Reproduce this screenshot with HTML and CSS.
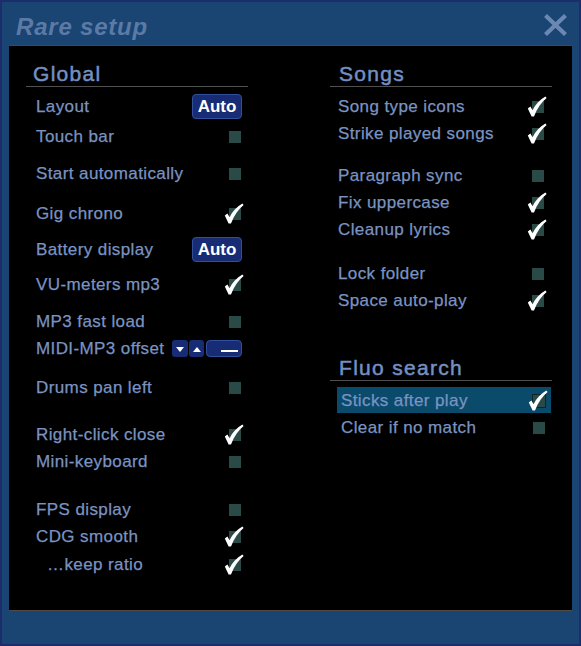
FILE: index.html
```html
<!DOCTYPE html>
<html>
<head>
<meta charset="utf-8">
<title>Rare setup</title>
<link rel="stylesheet" href="styles.css">
</head>
<body>
<div class="win">
  <div class="titlebar">
    <div class="title">Rare setup</div>
    <svg class="close" viewBox="0 0 23 22"><path d="M1.5 1.5 L21.5 20.5 M21.5 1.5 L1.5 20.5"/></svg>
  </div>
  <div class="panel">
    <div class="col left">
      <div class="hdr">Global</div>
      <div class="row"><span>Layout</span><span class="btn-auto">Auto</span></div>
      <div class="row sp3"><span>Touch bar</span><span class="cb"></span></div>
      <div class="row sp10"><span>Start automatically</span><span class="cb"></span></div>
      <div class="row sp13"><span>Gig chrono</span><span class="cb on"><svg class="tick" viewBox="0 0 20 21"><path d="M0.8 12.6 L3.4 10.4 L5.6 14.2 C8.5 8.6 12.5 4 18.4 0.6 L19.6 2 C14.6 6.4 10 12.4 7 20.4 L4.6 20.4 Z"/></svg></span></div>
      <div class="row sp9"><span>Battery display</span><span class="btn-auto">Auto</span></div>
      <div class="row sp8"><span>VU-meters mp3</span><span class="cb on"><svg class="tick" viewBox="0 0 20 21"><path d="M0.8 12.6 L3.4 10.4 L5.6 14.2 C8.5 8.6 12.5 4 18.4 0.6 L19.6 2 C14.6 6.4 10 12.4 7 20.4 L4.6 20.4 Z"/></svg></span></div>
      <div class="row sp10"><span>MP3 fast load</span><span class="cb"></span></div>
      <div class="row"><span>MIDI-MP3 offset</span>
        <span class="stepper">
          <span class="sb"><span class="tri-down"></span></span>
          <span class="sb up"><span class="tri-up"></span></span>
          <span class="sval"><span class="dash"></span></span>
        </span>
      </div>
      <div class="row sp12"><span>Drums pan left</span><span class="cb"></span></div>
      <div class="row sp20"><span>Right-click close</span><span class="cb on"><svg class="tick" viewBox="0 0 20 21"><path d="M0.8 12.6 L3.4 10.4 L5.6 14.2 C8.5 8.6 12.5 4 18.4 0.6 L19.6 2 C14.6 6.4 10 12.4 7 20.4 L4.6 20.4 Z"/></svg></span></div>
      <div class="row"><span>Mini-keyboard</span><span class="cb"></span></div>
      <div class="row sp21"><span>FPS display</span><span class="cb"></span></div>
      <div class="row"><span>CDG smooth</span><span class="cb on"><svg class="tick" viewBox="0 0 20 21"><path d="M0.8 12.6 L3.4 10.4 L5.6 14.2 C8.5 8.6 12.5 4 18.4 0.6 L19.6 2 C14.6 6.4 10 12.4 7 20.4 L4.6 20.4 Z"/></svg></span></div>
      <div class="row sp1 indent"><span>…keep ratio</span><span class="cb on"><svg class="tick" viewBox="0 0 20 21"><path d="M0.8 12.6 L3.4 10.4 L5.6 14.2 C8.5 8.6 12.5 4 18.4 0.6 L19.6 2 C14.6 6.4 10 12.4 7 20.4 L4.6 20.4 Z"/></svg></span></div>
    </div>
    <div class="col right">
      <div class="hdr">Songs</div>
      <div class="row"><span>Song type icons</span><span class="cb on"><svg class="tick" viewBox="0 0 20 21"><path d="M0.8 12.6 L3.4 10.4 L5.6 14.2 C8.5 8.6 12.5 4 18.4 0.6 L19.6 2 C14.6 6.4 10 12.4 7 20.4 L4.6 20.4 Z"/></svg></span></div>
      <div class="row"><span>Strike played songs</span><span class="cb on"><svg class="tick" viewBox="0 0 20 21"><path d="M0.8 12.6 L3.4 10.4 L5.6 14.2 C8.5 8.6 12.5 4 18.4 0.6 L19.6 2 C14.6 6.4 10 12.4 7 20.4 L4.6 20.4 Z"/></svg></span></div>
      <div class="row sp15"><span>Paragraph sync</span><span class="cb"></span></div>
      <div class="row"><span>Fix uppercase</span><span class="cb on"><svg class="tick" viewBox="0 0 20 21"><path d="M0.8 12.6 L3.4 10.4 L5.6 14.2 C8.5 8.6 12.5 4 18.4 0.6 L19.6 2 C14.6 6.4 10 12.4 7 20.4 L4.6 20.4 Z"/></svg></span></div>
      <div class="row"><span>Cleanup lyrics</span><span class="cb on"><svg class="tick" viewBox="0 0 20 21"><path d="M0.8 12.6 L3.4 10.4 L5.6 14.2 C8.5 8.6 12.5 4 18.4 0.6 L19.6 2 C14.6 6.4 10 12.4 7 20.4 L4.6 20.4 Z"/></svg></span></div>
      <div class="row sp17"><span>Lock folder</span><span class="cb"></span></div>
      <div class="row"><span>Space auto-play</span><span class="cb on"><svg class="tick" viewBox="0 0 20 21"><path d="M0.8 12.6 L3.4 10.4 L5.6 14.2 C8.5 8.6 12.5 4 18.4 0.6 L19.6 2 C14.6 6.4 10 12.4 7 20.4 L4.6 20.4 Z"/></svg></span></div>
      <div class="hdr sp42">Fluo search</div>
      <div class="row fl hl"><span>Sticks after play</span><span class="cb on"><svg class="tick" viewBox="0 0 20 21"><path d="M0.8 12.6 L3.4 10.4 L5.6 14.2 C8.5 8.6 12.5 4 18.4 0.6 L19.6 2 C14.6 6.4 10 12.4 7 20.4 L4.6 20.4 Z"/></svg></span></div>
      <div class="row fl"><span>Clear if no match</span><span class="cb"></span></div>
    </div>
  </div>
</div>
</body>
</html>
```

FILE: styles.css
```css
* { box-sizing: border-box; }

body {
  margin: 0;
  background: #1a4472;
  font-family: "Liberation Sans", Arial, sans-serif;
}

.win {
  width: 581px;
  height: 646px;
  border: 2px solid #1d2c6c;
  background: #1a4472;
  display: flex;
  flex-direction: column;
}

.titlebar {
  height: 43px;
  flex: none;
  display: flex;
  justify-content: space-between;
  align-items: flex-start;
  padding: 0 12px 0 14px;
}

.title {
  font-size: 24px;
  font-weight: bold;
  font-style: italic;
  line-height: 30px;
  padding-top: 10px;
  color: #5b7aa6;
  letter-spacing: 0.8px;
}

.close {
  width: 23px;
  height: 22px;
  margin-top: 12px;
}
.close path {
  stroke: #6a88b2;
  stroke-width: 4.2;
  fill: none;
}

.panel {
  margin: 0 7px;
  height: 566px;
  flex: none;
  background: #000;
  border-top: 1px solid #474747;
  border-bottom: 1px solid #4f4a44;
  display: grid;
  grid-template-columns: 222px 222px;
  column-gap: 82px;
  align-content: start;
  padding: 16px 0 0 17px;
}

.col {
  display: flex;
  flex-direction: column;
}

.hdr {
  font-size: 21px;
  line-height: 24px;
  color: #7290c4;
  -webkit-text-stroke: 0.5px #7290c4;
  letter-spacing: 1.3px;
  border-bottom: 1px solid #505050;
  padding-left: 7px;
  margin-bottom: 6px;
}
.right .hdr { padding-left: 9px; }

.row {
  height: 27px;
  flex: none;
  display: flex;
  align-items: center;
  justify-content: space-between;
  padding: 0 7px 0 10px;
  font-size: 17px;
  line-height: 27px;
  color: #7a93c2;
  -webkit-text-stroke: 0.25px #7a93c2;
  letter-spacing: 0.4px;
  white-space: nowrap;
}
.right .row { padding: 0 8px; }
.right .row.fl {
  margin: 0 1px 0 7px;
  padding: 0 6px 0 4px;
  height: 27px;
}
.right .row.hl {
  background: #0a4a6a;
  height: 26px;
  margin-bottom: 1px;
  padding-top: 1px;
}
.row.indent { padding-left: 21px; }

.sp1 { margin-top: 1px; }
.sp3 { margin-top: 3px; }
.sp8 { margin-top: 8px; }
.sp9 { margin-top: 9px; }
.sp10 { margin-top: 10px; }
.sp12 { margin-top: 12px; }
.sp13 { margin-top: 13px; }
.sp15 { margin-top: 15px; }
.sp17 { margin-top: 17px; }
.sp20 { margin-top: 20px; }
.sp21 { margin-top: 21px; }
.sp42 { margin-top: 42px; }

.cb {
  width: 12px;
  height: 12px;
  background: #2a4a48;
  position: relative;
  flex: none;
}
.hl .cb { box-shadow: 0 0 0 1px #102428; }

.tick {
  position: absolute;
  left: -5px;
  top: -5px;
  width: 20px;
  height: 21px;
}
.tick path { fill: #fff; }

.btn-auto {
  width: 50px;
  height: 25px;
  flex: none;
  border: 1px solid #31509c;
  background: #172c74;
  border-radius: 4px;
  color: #fff;
  -webkit-text-stroke: 0;
  font-weight: bold;
  font-size: 17px;
  line-height: 23px;
  text-align: center;
  letter-spacing: 0;
  margin-right: -1px;
}

.stepper {
  display: flex;
  align-items: center;
  margin-right: -1px;
}
.sb {
  width: 16px;
  height: 17px;
  background: #172c74;
  border-radius: 3px;
  display: flex;
  align-items: center;
  justify-content: center;
}
.sb.up {
  width: 15px;
  margin-left: 1px;
}
.tri-down {
  width: 0;
  height: 0;
  border-left: 4.5px solid transparent;
  border-right: 4.5px solid transparent;
  border-top: 5px solid #fff;
  margin-top: 1px;
}
.tri-up {
  width: 0;
  height: 0;
  border-left: 4px solid transparent;
  border-right: 4px solid transparent;
  border-bottom: 5px solid #fff;
  margin-top: 1px;
}
.sval {
  width: 36px;
  height: 17px;
  margin-left: 2px;
  border: 1px solid #31509c;
  border-radius: 4px;
  background: #172c74;
  display: flex;
  align-items: center;
  justify-content: flex-end;
  padding-right: 3px;
}
.dash {
  width: 17px;
  height: 2px;
  background: #fff;
  margin-top: 4px;
}
```
